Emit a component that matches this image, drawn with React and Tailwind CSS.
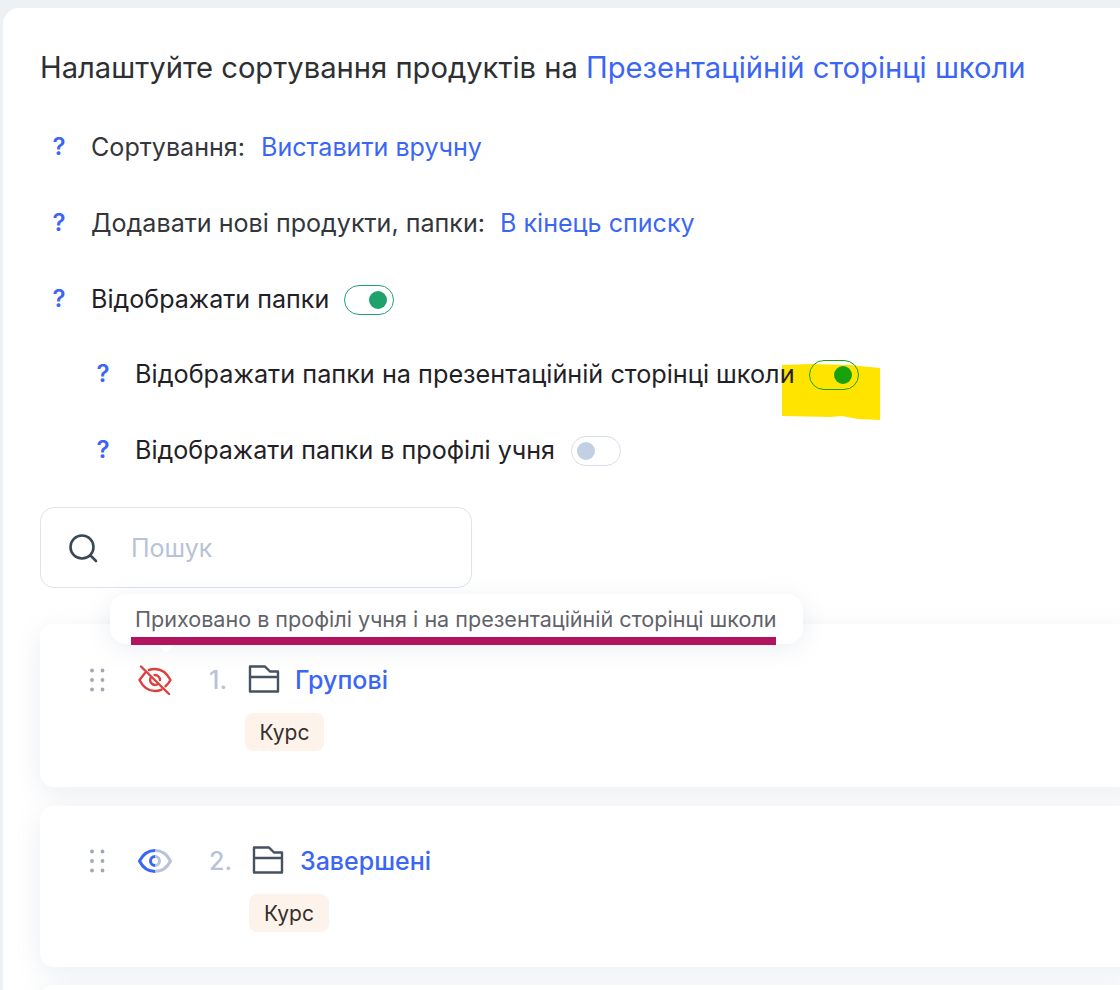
const F = { fontFamily: '"Inter","Noto Sans",sans-serif' };

function Toggle({ on, className, dot }) {
  return (
    <span className={`relative inline-block h-[30px] w-[50px] shrink-0 rounded-full border ${className}`}>
      <span className={`absolute top-1/2 h-[18px] w-[18px] -translate-y-1/2 rounded-full ${on ? 'right-[6px]' : 'left-[5px]'} ${dot}`} />
    </span>
  );
}

function Q() {
  return <span className="w-[14px] shrink-0 pb-[2px] text-center text-[24px] leading-none font-semibold text-[#3b66f5]">?</span>;
}

function Row({ indent, children }) {
  return (
    <div className={`flex h-[30px] items-center text-[25.1px] leading-[30px] whitespace-nowrap ${indent ? 'pl-[56px]' : 'pl-[12px]'}`}>
      <Q />
      {children}
    </div>
  );
}

function Dots() {
  return (
    <svg width="16" height="24" viewBox="0 0 16 24" className="shrink-0" fill="#a0a8b6">
      {[2.5, 12, 21.5].flatMap((y) => [3, 13.5].map((x) => <circle key={`${x}-${y}`} cx={x} cy={y} r="1.9" />))}
    </svg>
  );
}

function Folder() {
  return (
    <svg width="32" height="30" viewBox="0 0 32 30" fill="none" stroke="#465161" strokeWidth="2.4" className="shrink-0">
      <path d="M2 1.500h15l5 5h8v20H2z M2 12h28" strokeLinejoin="round" />
    </svg>
  );
}

function EyeOff() {
  return (
    <svg width="34" height="30" viewBox="0 0 34 30" fill="none" stroke="#dc3f3c" strokeWidth="2.4" strokeLinecap="round" strokeLinejoin="round" className="shrink-0">
      <path d="M7 8 1.500 15C5 22 10 26 17 26c2.500 0 4.500-.5 6.500-1.400" />
      <path d="M11 5c1.900-.7 3.900-1 6-1 7 0 12 4.500 15.500 11-1.400 2.500-3 4.600-5 6.200" />
      <path d="M12.500 13a5 5 0 0 0 6.500 6.500" />
      <path d="M16.500 10a5 5 0 0 1 5.500 5" />
      <path d="M3 1.500 31 29" />
    </svg>
  );
}

function Eye() {
  return (
    <svg width="34" height="26" viewBox="0 0 34 26" fill="none" strokeWidth="3" strokeLinejoin="round" className="shrink-0">
      <path d="M17 2.500C26 2.500 30.500 9 32.500 13 30.500 17 26 23.500 17 23.500" stroke="#b7c3d7" />
      <path d="M17 8.500a4.500 4.500 0 0 1 0 9" stroke="#b7c3d7" />
      <path d="M17 2.500C8 2.500 3.500 9 1.500 13 3.500 17 8 23.500 17 23.500" stroke="#3b66f5" />
      <path d="M17 8.500a4.500 4.500 0 0 0 0 9" stroke="#3b66f5" />
    </svg>
  );
}

function Item({ num, name, icon, box, rowTop, badge, numGap, folderGap, nameGap }) {
  return (
    <div className={`rounded-[14px] bg-white shadow-[0_6px_26px_rgba(120,135,165,0.14)] ${box}`}>
      <div className={`flex items-center pl-[49px] ${rowTop}`}>
        <Dots />
        <div className="ml-[33px]">{icon}</div>
        <span className={`${numGap} text-[25px] leading-[30px] font-medium text-[#b7c3d7]`}>{num}</span>
        <div className={folderGap}><Folder /></div>
        <span className={`${nameGap} text-[25px] leading-[30px] font-medium text-[#3b66f5]`}>{name}</span>
      </div>
      <div className={`${badge} mt-[18px] flex h-[38px] items-center justify-center rounded-[8px] bg-[#fef3ea] text-[21px] text-[#33302e]`}>
        Курс
      </div>
    </div>
  );
}

export default function App() {
  return (
    <div style={F} className="relative h-[990px] w-[1120px] overflow-hidden bg-[#eef1f3] pl-[3px] pt-[8px]">
      <div className="relative h-[982px] w-[1140px] rounded-tl-[16px] bg-white">
        <div className="relative pl-[37px] pt-[42px]">
          <h1 className="text-[29.18px] leading-[36px] font-normal whitespace-nowrap text-[#2d2f33]">
            Налаштуйте сортування продуктів на <span className="text-[#3b66f5]">Презентаційній сторінці школи</span>
          </h1>

          <div className="mt-[47px] flex flex-col gap-[46px]">
            <Row>
              <span className="ml-[25px] pb-[2px] text-[#33363b]">Сортування:</span>
              <span className="ml-[16px] pb-[2px] text-[#3b66f5]">Виставити вручну</span>
            </Row>
            <Row>
              <span className="ml-[25px] pb-[2px] text-[#33363b]">Додавати нові продукти, папки:</span>
              <span className="ml-[15px] pb-[2px] text-[#3b66f5]">В кінець списку</span>
            </Row>
            <Row>
              <span className="ml-[25px] pb-[2px] text-[#1f2126]">Відображати папки</span>
              <Toggle on className="ml-[15px] border-[#1fa36d] bg-white" dot="bg-[#1fa36d]" />
            </Row>
            <div className="-mt-[1px]">
              <Row indent>
                <span className="relative z-10 ml-[25px] pb-[2px] text-[25.25px] text-[#1f2126]">Відображати папки на презентаційній сторінці школи</span>
                <span className="relative ml-[14px] flex">
                  <svg width="100" height="58" viewBox="0 0 100 58" className="absolute -left-[27px] top-[3px]">
                    <path d="M0 2 30 1 68 2 98 5 98 57 76 56 60 53 48 54 0 53Z" fill="#ffe400" />
                  </svg>
                  <Toggle on className="relative border-[#17a20c] bg-transparent" dot="bg-[#17a20c]" />
                </span>
              </Row>
            </div>
            <Row indent>
              <span className="ml-[25px] pb-[2px] text-[#1f2126]">Відображати папки в профілі учня</span>
              <Toggle className="ml-[16px] border-[#d8deea] bg-white" dot="bg-[#c3cfe2]" />
            </Row>
          </div>

          <div className="mt-[41px] flex h-[81px] w-[432px] items-center rounded-[14px] border border-[#dfe2ee] bg-white pl-[27px]">
            <svg width="30" height="30" viewBox="0 0 30 30" fill="none" stroke="#3b4656" strokeWidth="2.600" strokeLinecap="round">
              <circle cx="14" cy="14" r="11.500" />
              <path d="m23 23 5 5" />
            </svg>
            <span className="ml-[33px] pt-[2px] text-[25px] text-[#b7c3d7]">Пошук</span>
          </div>

          <div className="mt-[36px]">
            <Item num="1." name="Групові" icon={<EyeOff />} box="h-[163px]" rowTop="pt-[41px]" badge="ml-[205px] w-[79px] pt-[2px]" numGap="ml-[37px]" folderGap="ml-[21px]" nameGap="ml-[15px]" />
            <Item num="2." name="Завершені" icon={<Eye />} box="mt-[19px] h-[161px]" rowTop="pt-[40px]" badge="ml-[209px] w-[80px] pt-[2px]" numGap="ml-[37px]" folderGap="ml-[20px]" nameGap="ml-[16px]" />
            <div className="mt-[18px] h-[40px] rounded-t-[14px] bg-white shadow-[0_6px_26px_rgba(120,135,165,0.14)]" />
          </div>
        </div>

        {/* tooltip annotation */}
        <div className="absolute left-[107px] top-[586px] h-[50px] w-[693px] rounded-[16px] bg-white pl-[25px] pt-[10px] text-[21.55px] leading-[30px] whitespace-nowrap text-[#5f6369] shadow-[0_4px_24px_rgba(120,135,165,0.14)]">
          Приховано в профілі учня і на презентаційній сторінці школи
          <span className="absolute bottom-[-6px] left-[50px] h-[12px] w-[12px] rotate-45 bg-white" />
        </div>
        <div className="absolute left-[128px] top-[629px] h-[8px] w-[645px] bg-[#b2135f]" />
      </div>
    </div>
  );
}
